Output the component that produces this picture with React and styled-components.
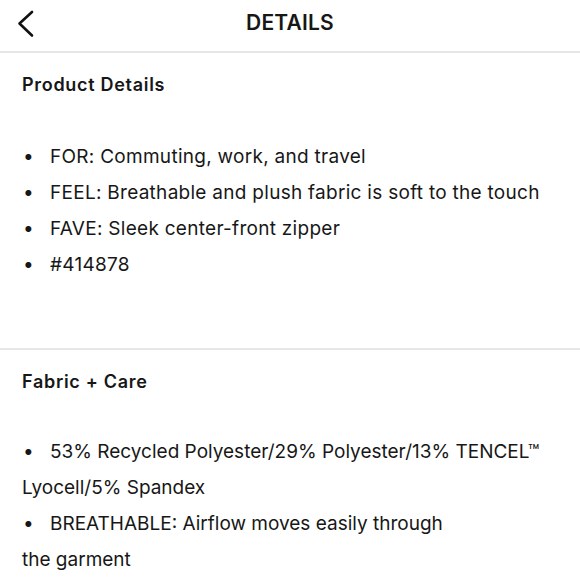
import React from 'react'
import styled, { createGlobalStyle } from 'styled-components'

const GlobalStyle = createGlobalStyle`
  html, body {
    margin: 0;
    padding: 0;
    background: #ffffff;
  }
  body {
    font-family: Inter, "Noto Sans", sans-serif;
    color: #171717;
  }
`

const Page = styled.div`
  width: 580px;
  min-height: 580px;
  overflow: hidden;
`

const TopBar = styled.header`
  position: relative;
  height: 51px;
  display: flex;
  align-items: flex-start;
  justify-content: center;
  border-bottom: 2px solid #e6e6e6;
`

const BackButton = styled.button`
  position: absolute;
  left: 12px;
  top: 8px;
  width: 28px;
  height: 32px;
  padding: 0;
  border: none;
  background: none;
  display: flex;
  align-items: center;
  justify-content: center;
  cursor: pointer;
`

const Title = styled.h1`
  margin: 11px 0 0;
  font-size: 21px;
  line-height: 24px;
  font-weight: 600;
  letter-spacing: 0.2px;
`

const Section = styled.section`
  padding: ${p => p.$top}px 22px ${p => p.$bottom}px;
  border-bottom: ${p => (p.$divider ? '2px solid #e6e6e6' : 'none')};
`

const Heading = styled.h2`
  margin: 0 0 ${p => p.$gap}px;
  font-size: 18px;
  font-weight: 600;
  line-height: 28px;
  letter-spacing: 0.7px;
`

const List = styled.ul`
  list-style: none;
  margin: 0;
  padding: 0;
`

const Item = styled.li`
  font-size: 19px;
  line-height: 36px;
  font-weight: 400;
  letter-spacing: ${p => p.$spacing ?? 0.28}px;
  &::before {
    content: '•';
    display: inline-block;
    width: 28px;
    padding-left: 1px;
    box-sizing: border-box;
  }
`

const Chevron = () => (
  <svg width="18" height="28" viewBox="0 0 18 28" fill="none">
    <polyline
      points="15,2 2.5,13.5 15,25.5"
      stroke="#111"
      strokeWidth="2.6"
      strokeLinecap="round"
      strokeLinejoin="round"
    />
  </svg>
)

const productDetails = [
  'FOR: Commuting, work, and travel',
  'FEEL: Breathable and plush fabric is soft to the touch',
  'FAVE: Sleek center-front zipper',
  '#414878',
]

export default function App() {
  return (
    <Page>
      <GlobalStyle />
      <TopBar>
        <BackButton aria-label="Back">
          <Chevron />
        </BackButton>
        <Title>DETAILS</Title>
      </TopBar>

      <Section $top={18} $bottom={65} $divider>
        <Heading $gap={40}>Product Details</Heading>
        <List>
          {productDetails.map(d => (
            <Item key={d}>{d}</Item>
          ))}
        </List>
      </Section>

      <Section $top={18} $bottom={0}>
        <Heading $gap={38}>Fabric + Care</Heading>
        <List>
          <Item $spacing={0}>
            53% Recycled Polyester/29% Polyester/13% TENCEL™
            <br />
            Lyocell/5% Spandex
          </Item>
          <Item $spacing={0}>
            BREATHABLE: Airflow moves easily through
            <br />
            the garment
          </Item>
        </List>
      </Section>
    </Page>
  )
}
